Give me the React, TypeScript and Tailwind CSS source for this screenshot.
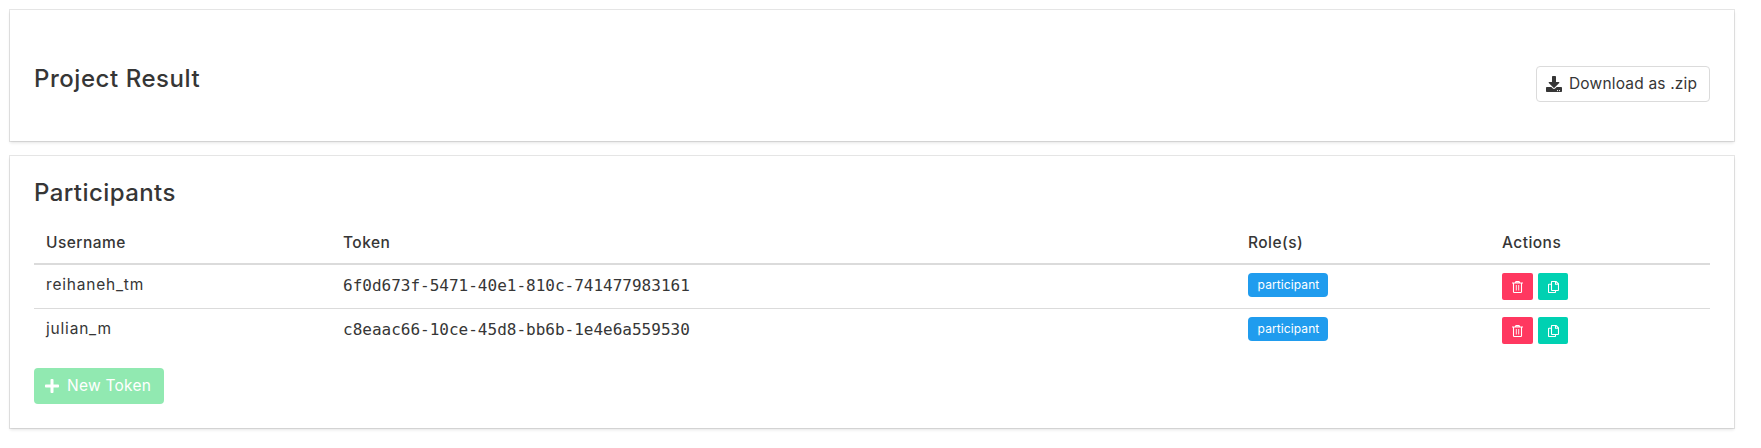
import type { ReactNode } from "react";
import { FaDownload, FaPlus } from "react-icons/fa";

type Participant = { username: string; token: string; role: string };

const participants: Participant[] = [
  { username: "reihaneh_tm", token: "6f0d673f-5471-40e1-810c-741477983161", role: "participant" },
  { username: "julian_m", token: "c8eaac66-10ce-45d8-bb6b-1e4e6a559530", role: "participant" },
];

function Box({ children, className }: { children: ReactNode; className: string }) {
  return (
    <section
      className={`bg-white px-6 shadow-[0_2px_3px_rgba(10,10,10,0.1),0_0_0_1px_rgba(10,10,10,0.1)] ${className}`}
    >
      {children}
    </section>
  );
}

function TrashIcon() {
  return (
    <svg width="11" height="12" viewBox="0 0 11 12" fill="none" stroke="currentColor">
      <path d="M0 2h11M3.3 1.8L4 .6h3l.7 1.2M1.5 2v8.7q0 .8.8.8h6.4q.8 0 .8-.8V2" strokeWidth="1.1" />
      <path d="M4.3 4v5.5M6.7 4v5.5" strokeWidth=".9" />
    </svg>
  );
}

function CopyIcon() {
  return (
    <svg width="11" height="12" viewBox="0 0 11 12" fill="none" stroke="currentColor" strokeWidth="1.1">
      <path d="M3.5 1.1q0-.6.6-.6h4l2.4 2.4v6q0 .6-.6.6H4.1q-.6 0-.6-.6zM7.5.5v2.8h3" />
      <path d="M3.5 3.2H1.1q-.6 0-.6.6v7.1q0 .6.6.6h5.8q.6 0 .6-.6V9.6" />
    </svg>
  );
}

export default function App() {
  return (
    <main className="flex min-h-[448px] flex-col gap-[15px] bg-white pt-[10px] pr-[27px] pl-[10px] font-['Inter',sans-serif] text-[15.5px] leading-6 text-[#363636]">
      <Box className="flex h-[131px] items-start justify-between">
        <h1 className="mt-[55px] text-2xl leading-[27px] font-medium tracking-[0.55px]">Project Result</h1>
        <button className="mt-14 flex h-9 w-[174px] items-center rounded border border-[#dbdbdb] pl-[9px]">
          <FaDownload className="size-4" />
          <span className="ml-[7px] tracking-[0.18px] whitespace-nowrap">Download as .zip</span>
        </button>
      </Box>

      <Box className="h-[272px] pt-[23px]">
        <h2 className="text-2xl leading-[27px] font-medium tracking-[0.42px]">Participants</h2>
        <table className="mt-4 w-full table-fixed border-separate border-spacing-0 text-left">
          <colgroup>
            <col className="w-[297px]" />
            <col className="w-[905px]" />
            <col className="w-[254px]" />
            <col />
          </colgroup>
          <thead>
            <tr className="h-[43px] align-top *:border-b-2 *:border-[#dbdbdb] *:px-3 *:pt-[9px] *:font-medium *:tracking-[0.45px]">
              <th>Username</th>
              <th>Token</th>
              <th>Role(s)</th>
              <th>Actions</th>
            </tr>
          </thead>
          <tbody>
            {participants.map((p) => (
              <tr key={p.username} className="h-11 align-top *:border-b *:border-[#dbdbdb] *:px-3 last:*:border-b-0">
                <td className="pt-2 tracking-[0.8px]">{p.username}</td>
                <td className="pt-[9px] font-['DejaVu_Sans_Mono',monospace] text-base">{p.token}</td>
                <td className="pt-2">
                  <span className="flex h-6 w-20 items-center justify-center rounded bg-[#209cee] pl-px text-xs leading-6 tracking-[0.1px] text-white">
                    {p.role}
                  </span>
                </td>
                <td className="pt-2">
                  <div className="flex gap-[5px] text-white">
                    <button aria-label="Delete" className="flex h-[27px] w-[31px] items-center justify-center rounded-xs bg-[#ff3860]">
                      <TrashIcon />
                    </button>
                    <button aria-label="Copy" className="flex h-[27px] w-[30px] items-center justify-center rounded-xs bg-[#00d1b2]">
                      <CopyIcon />
                    </button>
                  </div>
                </td>
              </tr>
            ))}
          </tbody>
        </table>
        <button className="mt-[15px] flex h-9 w-[130px] items-center rounded bg-[#91e9b1] pl-[10px] text-white">
          <FaPlus className="size-4" />
          <span className="ml-[7px] tracking-[0.25px] whitespace-nowrap">New Token</span>
        </button>
      </Box>
    </main>
  );
}
